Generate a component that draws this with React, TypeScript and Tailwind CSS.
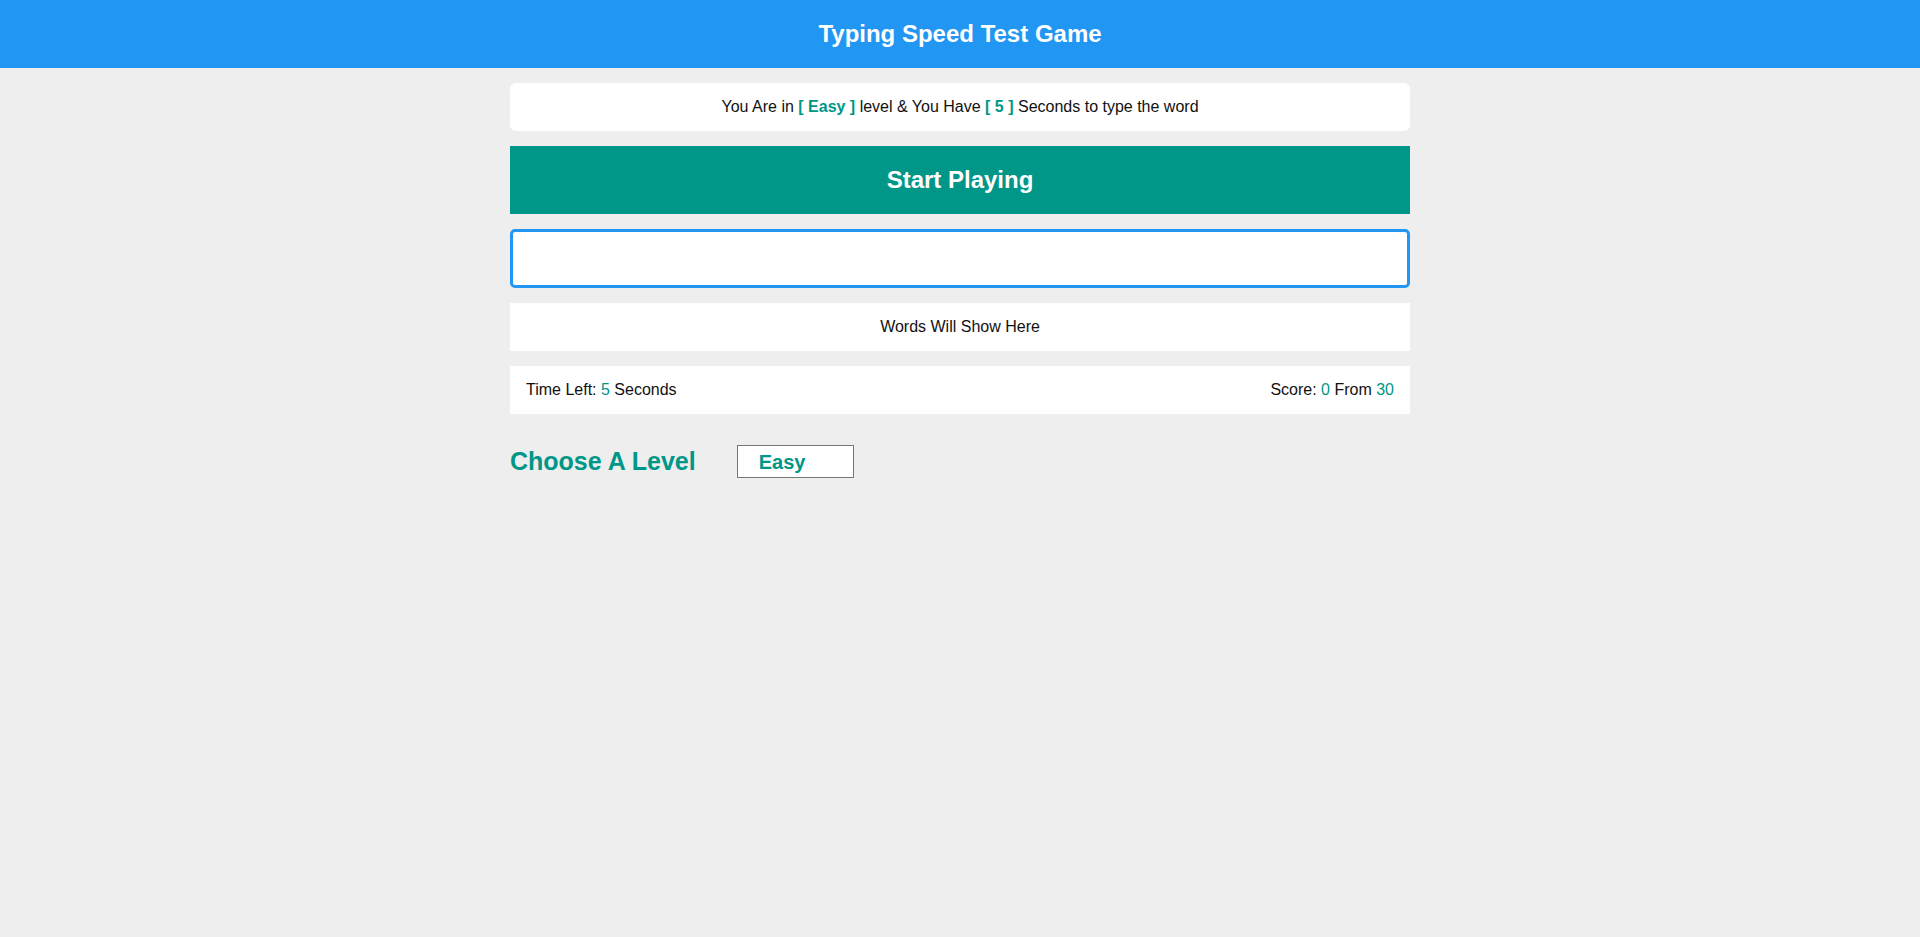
export default function App() {
  return (
    <div className="min-h-[937px] bg-[#eeeeee] font-['Liberation_Sans',Arial,sans-serif] text-[#111]">
      <header className="flex h-[68px] items-center justify-center bg-[#2196f3]">
        <h1 className="text-[24px] font-bold text-white">Typing Speed Test Game</h1>
      </header>

      <main className="mx-auto flex w-[900px] flex-col gap-[15px] pt-[15px]">
        <div className="flex h-[48px] items-center justify-center rounded-[6px] bg-white text-[16px]">
          <span>
            You Are in <span className="font-bold text-[#009688]">[ Easy ]</span> level &amp; You Have{" "}
            <span className="font-bold text-[#009688]">[ 5 ]</span> Seconds to type the word
          </span>
        </div>

        <button className="flex h-[68px] items-center justify-center bg-[#009688] text-[24px] font-bold text-white">
          Start Playing
        </button>

        <input
          type="text"
          className="h-[59px] w-full rounded-[5px] border-[3px] border-[#2196f3] bg-white px-3 text-[16px] outline-none"
        />

        <div className="flex h-[48px] items-center justify-center bg-white text-[16px]">
          Words Will Show Here
        </div>

        <div className="flex h-[48px] items-center justify-between bg-white px-[16px] text-[16px]">
          <span>
            Time Left: <span className="text-[#009688]">5</span> Seconds
          </span>
          <span>
            Score: <span className="text-[#009688]">0</span> From <span className="text-[#009688]">30</span>
          </span>
        </div>

        <div className="mt-[14px] flex items-center">
          <h2 className="text-[25px] font-bold text-[#009688]">Choose A Level</h2>
          <div className="ml-[41px] flex h-[33px] w-[117px] items-center border border-[#777] bg-white pl-[21px] text-[20px] font-bold text-[#009688]">
            Easy
          </div>
        </div>
      </main>
    </div>
  );
}
